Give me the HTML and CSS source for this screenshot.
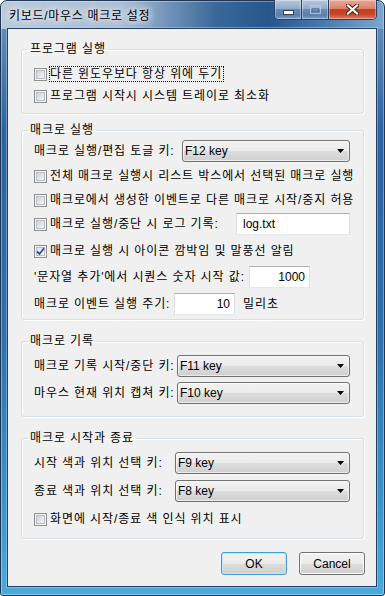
FILE: index.html
```html
<!DOCTYPE html>
<html lang="ko">
<head>
    <meta charset="UTF-8">
    <title>키보드/마우스 매크로 설정</title>
    <link rel="stylesheet" href="styles.css">
</head>
<body>
    <div class="window">
        <div class="titlebar">
            <span class="title">키보드/마우스 매크로 설정</span>
            <div class="caption-buttons">
                <span class="cap cap-min">
                    <svg width="11" height="5" viewBox="0 0 11 5"><rect x="0.5" y="0.5" width="10" height="4" fill="#fff" stroke="#34445e"/></svg>
                </span>
                <span class="cap cap-max">
                    <svg width="11" height="9" viewBox="0 0 11 9"><rect x="0.5" y="0.5" width="10" height="8" fill="none" stroke="#c5d3e4" stroke-opacity="0.7"/><rect x="1.5" y="1.5" width="8" height="1" fill="#c5d3e4" fill-opacity="0.7"/><rect x="2.5" y="3.5" width="6" height="3" fill="none" stroke="#4a6a94" stroke-opacity="0.6"/></svg>
                </span>
                <span class="cap cap-close">
                    <svg width="13" height="11" viewBox="0 0 13 11"><path d="M2 1.5L11 9.5M11 1.5L2 9.5" stroke="#4a1f14" stroke-width="4.2" stroke-linecap="square"/><path d="M2 1.5L11 9.5M11 1.5L2 9.5" stroke="#fff" stroke-width="2.2" stroke-linecap="square"/></svg>
                </span>
            </div>
        </div>

        <div class="client">
            <fieldset class="group group-program">
                <legend>프로그램 실행</legend>
                <div class="rows rows-program">
                    <label class="row check-row">
                        <span class="box"></span>
                        <span class="text focus">다른 윈도우보다 항상 위에 두기</span>
                    </label>
                    <label class="row check-row">
                        <span class="box"></span>
                        <span class="text">프로그램 시작시 시스템 트레이로 최소화</span>
                    </label>
                </div>
            </fieldset>

            <fieldset class="group group-exec">
                <legend>매크로 실행</legend>
                <div class="rows rows-exec">
                    <div class="row">
                        <span class="label">매크로 실행/편집 토글 키:</span>
                        <div class="combo combo-exec">
                            <span>F12 key</span>
                            <svg width="7" height="4" viewBox="0 0 7 4"><path d="M0 0h7L3.5 4z" fill="#000"/></svg>
                        </div>
                    </div>
                    <label class="row check-row">
                        <span class="box"></span>
                        <span class="text">전체 매크로 실행시 리스트 박스에서 선택된 매크로 실행</span>
                    </label>
                    <label class="row check-row">
                        <span class="box"></span>
                        <span class="text">매크로에서 생성한 이벤트로 다른 매크로 시작/중지 허용</span>
                    </label>
                    <div class="row check-row">
                        <span class="box"></span>
                        <span class="text">매크로 실행/중단 시 로그 기록:</span>
                        <div class="field field-log">log.txt</div>
                    </div>
                    <label class="row check-row">
                        <span class="box checked">
                            <svg width="9" height="9" viewBox="0 0 9 9"><path d="M1 4.5L3.5 7L8 1.2" fill="none" stroke="#2a4fa6" stroke-width="1.8"/></svg>
                        </span>
                        <span class="text">매크로 실행 시 아이콘 깜박임 및 말풍선 알림</span>
                    </label>
                    <div class="row">
                        <span class="label label-seq">'문자열 추가'에서 시퀀스 숫자 시작 값:</span>
                        <div class="field field-num">1000</div>
                    </div>
                    <div class="row">
                        <span class="label label-period">매크로 이벤트 실행 주기:</span>
                        <div class="field field-num">10</div>
                        <span class="unit">밀리초</span>
                    </div>
                </div>
            </fieldset>

            <fieldset class="group group-record">
                <legend>매크로 기록</legend>
                <div class="rows rows-record">
                    <div class="row">
                        <span class="label">매크로 기록 시작/중단 키:</span>
                        <div class="combo combo-record">
                            <span>F11 key</span>
                            <svg width="7" height="4" viewBox="0 0 7 4"><path d="M0 0h7L3.5 4z" fill="#000"/></svg>
                        </div>
                    </div>
                    <div class="row">
                        <span class="label">마우스 현재 위치 캡쳐 키:</span>
                        <div class="combo combo-record">
                            <span>F10 key</span>
                            <svg width="7" height="4" viewBox="0 0 7 4"><path d="M0 0h7L3.5 4z" fill="#000"/></svg>
                        </div>
                    </div>
                </div>
            </fieldset>

            <fieldset class="group group-range">
                <legend>매크로 시작과 종료</legend>
                <div class="rows rows-range">
                    <div class="row">
                        <span class="label">시작 색과 위치 선택 키:</span>
                        <div class="combo combo-range">
                            <span>F9 key</span>
                            <svg width="7" height="4" viewBox="0 0 7 4"><path d="M0 0h7L3.5 4z" fill="#000"/></svg>
                        </div>
                    </div>
                    <div class="row">
                        <span class="label">종료 색과 위치 선택 키:</span>
                        <div class="combo combo-range">
                            <span>F8 key</span>
                            <svg width="7" height="4" viewBox="0 0 7 4"><path d="M0 0h7L3.5 4z" fill="#000"/></svg>
                        </div>
                    </div>
                    <label class="row check-row">
                        <span class="box"></span>
                        <span class="text">화면에 시작/종료 색 인식 위치 표시</span>
                    </label>
                </div>
            </fieldset>

            <div class="buttons">
                <button class="btn btn-default">OK</button>
                <button class="btn">Cancel</button>
            </div>
        </div>
    </div>
</body>
</html>
```

FILE: styles.css
```css
* {
    margin: 0;
    padding: 0;
    box-sizing: border-box;
}

body {
    background: #fff;
    font-family: "Liberation Sans", "Noto Sans CJK KR", sans-serif;
    font-size: 12px;
    line-height: 16px;
    letter-spacing: 0.9px;
    color: #000;
}

/* window frame */
.window {
    width: 385px;
    height: 596px;
    padding: 0 7px 8px 6px;
    display: flex;
    flex-direction: column;
    border: 1px solid #1e3554;
    border-radius: 7px 7px 3px 3px;
    box-shadow: inset 0 0 0 1px rgba(255, 255, 255, 0.35);
    background:
        linear-gradient(90deg, #b9c9dc 0%, #a8bbd2 32%, #6f91b8 44%, #3a6899 56%, #25568c 70%, #4c7fb5 86%, #7ea6cf 100%) 0 0 / 100% 28px no-repeat,
        linear-gradient(180deg, #6f95bf 0%, #2b63a0 22%, #2c6fab 55%, #3b95cb 85%, #49aadb 100%);
}

.titlebar {
    height: 28px;
    display: flex;
    align-items: flex-start;
    margin-top: -1px;
}

.title {
    padding: 8px 0 0 2px;
    line-height: 16px;
    letter-spacing: 0.7px;
    text-shadow: 0 0 6px #fff, 0 0 10px rgba(255, 255, 255, 0.9), 0 0 14px rgba(255, 255, 255, 0.8);
}

.caption-buttons {
    margin-left: auto;
    display: flex;
    height: 20px;
    border: 1px solid #2a3f5c;
    border-top: none;
    border-radius: 0 0 5px 5px;
    overflow: hidden;
}

.cap {
    display: flex;
    justify-content: center;
    align-items: center;
    height: 19px;
    box-shadow: inset 0 0 0 1px rgba(255, 255, 255, 0.35);
}

.cap-min,
.cap-max {
    width: 27px;
    border-right: 1px solid #2a3f5c;
    background: linear-gradient(180deg, #b7c8de 0%, #93abc9 45%, #6a8bb5 50%, #5b7fad 80%, #7c9fcb 100%);
}

.cap-min svg {
    margin-top: 6px;
}

.cap-close {
    width: 47px;
    background: linear-gradient(180deg, #e9a996 0%, #dc826b 45%, #c43f20 50%, #c8442a 75%, #de7d5e 100%);
}

/* client area */
.client {
    flex: 1;
    display: flex;
    flex-direction: column;
    background: #f0f0f0;
    border: 1px solid #253f60;
    box-shadow: 0 0 0 1px rgba(190, 215, 240, 0.45);
}

.group {
    margin: 0 12px 0 13px;
    padding: 0 13px 0 6px;
    border: 1px solid #d5dfe5;
    border-radius: 3px;
    box-shadow: inset 1px 1px 0 #fff, 1px 1px 0 #fff;
    min-width: 0;
}

.group legend {
    padding: 0 2px;
    line-height: 16px;
}

.group-program {
    margin-top: 12px;
    padding-top: 6px;
    padding-bottom: 6px;
}

.group-exec {
    margin-top: 8px;
    padding-top: 1px;
}

.group-record {
    margin-top: 13px;
    padding-top: 4px;
    padding-bottom: 9px;
}

.group-range {
    margin-top: 13px;
    padding-top: 3px;
    padding-bottom: 5px;
}

.rows {
    display: grid;
    grid-template-columns: minmax(0, 1fr);
    padding-left: 6px;
}

.rows-program { grid-template-rows: 22px 22px; }
.rows-exec { grid-template-rows: 24px 26px 22px 26px 28px 24px 30px; }
.rows-record { grid-template-rows: 26px 28px; }
.rows-range { grid-template-rows: 28px 28px 28px; }

.row {
    display: flex;
    align-items: center;
    white-space: nowrap;
    min-width: 0;
}

/* checkbox */
.box {
    width: 13px;
    height: 13px;
    flex: none;
    margin-right: 2px;
    border: 1px solid #8e8f8f;
    background: linear-gradient(135deg, #c4c8ce 0%, #e2e4e7 50%, #f8f8f8 100%);
    box-shadow: inset 0 0 0 1px #f4f4f4, inset 0 0 0 2px #b9bdc3;
    display: flex;
    justify-content: center;
    align-items: center;
}

.box.checked {
    background: linear-gradient(135deg, #d9dde2 0%, #eceef0 50%, #fafafa 100%);
}

.text {
    border: 1px dotted transparent;
    line-height: 14px;
    padding: 0 1px 0 0;
}

.text.focus {
    border-color: #000;
}

.label {
    flex: none;
}

.label-seq {
    width: 215px;
}

.label-period {
    width: 140px;
}

.unit {
    margin-left: 8px;
}

/* dropdowns */
.combo {
    flex: none;
    margin-left: auto;
    height: 22px;
    display: flex;
    align-items: center;
    justify-content: space-between;
    padding: 0 5px 0 2px;
    letter-spacing: 0;
    border: 1px solid #707070;
    border-radius: 3px;
    background: linear-gradient(180deg, #f2f2f2 0%, #ebebeb 50%, #dddddd 51%, #cfcfcf 100%);
    box-shadow: inset 0 0 0 1px rgba(255, 255, 255, 0.6);
}

.combo-exec { width: 168px; }
.combo-record { width: 173px; }
.combo-range { width: 175px; }

/* edit boxes */
.field {
    flex: none;
    height: 22px;
    line-height: 20px;
    letter-spacing: 0;
    background: #fff;
    border: 1px solid #dbdfe6;
    border-top-color: #abadb3;
    border-bottom-color: #e3e9ef;
}

.field-log {
    margin-left: auto;
    width: 114px;
    padding-left: 6px;
}

.field-num {
    width: 61px;
    text-align: right;
    padding-right: 4px;
}

/* dialog buttons */
.buttons {
    display: flex;
    justify-content: flex-end;
    gap: 12px;
    margin: 13px 11px 0 0;
}

.btn {
    width: 66px;
    height: 23px;
    font: inherit;
    letter-spacing: 0;
    color: #000;
    border: 1px solid #707070;
    border-radius: 3px;
    background: linear-gradient(180deg, #f2f2f2 0%, #ebebeb 50%, #dddddd 51%, #cfcfcf 100%);
    box-shadow: inset 0 0 0 1px #fcfcfc;
}

.btn-default {
    border-color: #3c9fd4;
    box-shadow: inset 0 0 0 1px #bfe6f9;
}
```
